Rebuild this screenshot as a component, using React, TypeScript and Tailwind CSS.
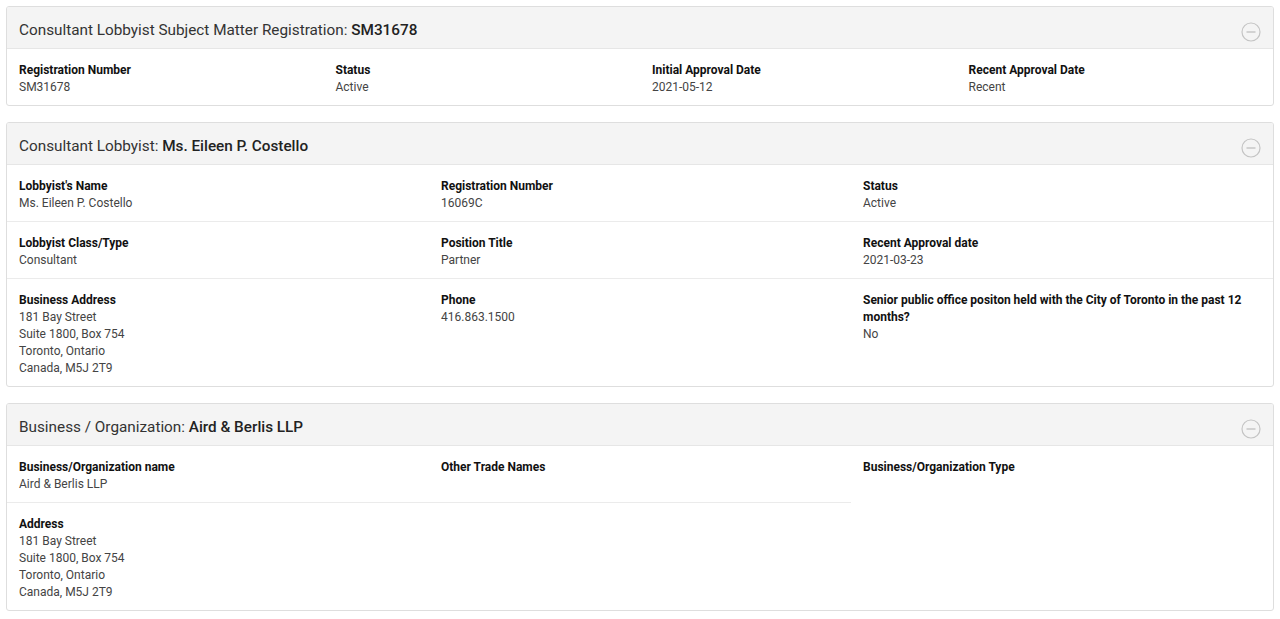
import React from 'react'

const font = { fontFamily: 'Roboto, "Noto Sans", sans-serif' }

const MinusCircle = () => (
  <svg width="20" height="20" viewBox="0 0 20 20" fill="none" className="shrink-0">
    <circle cx="10" cy="10" r="9" stroke="#c4c4c4" strokeWidth="1.2" />
    <line x1="5.5" y1="10" x2="14.5" y2="10" stroke="#b0b0b0" strokeWidth="1.2" />
  </svg>
)

interface PanelProps {
  label: string
  value: string
  children: React.ReactNode
}

const Panel = ({ label, value, children }: PanelProps) => (
  <section className="border border-[#dedede] rounded-[3px] bg-white overflow-hidden">
    <div className="h-[42px] bg-[#f4f4f4] border-b border-[#e6e6e6] flex items-center justify-between pl-3 pr-3">
      <h2 className="text-[15.3px] text-[#333] leading-none pt-[6px]">
        {label}: <span className="font-medium text-[#222]">{value}</span>
      </h2>
      <div className="pt-[8px]">
        <MinusCircle />
      </div>
    </div>
    {children}
  </section>
)

const Field = ({ label, lines, className = '' }: { label: string; lines?: string[]; className?: string }) => (
  <div className={`pl-3 pr-3 pt-[13px] pb-[9px] text-[12px] leading-[17px] ${className}`}>
    <div className="font-bold text-[#111]">{label}</div>
    {lines?.map((l) => (
      <div key={l} className="text-[#444]">{l}</div>
    ))}
  </div>
)

const address = ['181 Bay Street', 'Suite 1800, Box 754', 'Toronto, Ontario', 'Canada, M5J 2T9']

export default function App() {
  return (
    <div className="bg-white min-h-screen px-[6px] pt-[6px] flex flex-col gap-4" style={font}>
      <Panel label="Consultant Lobbyist Subject Matter Registration" value="SM31678">
        <div className="grid grid-cols-4">
          <Field label="Registration Number" lines={['SM31678']} />
          <Field label="Status" lines={['Active']} />
          <Field label="Initial Approval Date" lines={['2021-05-12']} />
          <Field label="Recent Approval Date" lines={['Recent']} />
        </div>
      </Panel>

      <Panel label="Consultant Lobbyist" value="Ms. Eileen P. Costello">
        <div className="grid grid-cols-3">
          <Field className="border-b border-[#ebebeb]" label="Lobbyist's Name" lines={['Ms. Eileen P. Costello']} />
          <Field className="border-b border-[#ebebeb]" label="Registration Number" lines={['16069C']} />
          <Field className="border-b border-[#ebebeb]" label="Status" lines={['Active']} />
          <Field className="border-b border-[#ebebeb]" label="Lobbyist Class/Type" lines={['Consultant']} />
          <Field className="border-b border-[#ebebeb]" label="Position Title" lines={['Partner']} />
          <Field className="border-b border-[#ebebeb]" label="Recent Approval date" lines={['2021-03-23']} />
          <Field label="Business Address" lines={address} />
          <Field label="Phone" lines={['416.863.1500']} />
          <Field label="Senior public office positon held with the City of Toronto in the past 12 months?" lines={['No']} />
        </div>
      </Panel>

      <Panel label="Business / Organization" value="Aird & Berlis LLP">
        <div className="grid grid-cols-3">
          <Field className="border-b border-[#ebebeb]" label="Business/Organization name" lines={['Aird & Berlis LLP']} />
          <Field className="border-b border-[#ebebeb]" label="Other Trade Names" />
          <Field className="row-span-2" label="Business/Organization Type" />
          <Field label="Address" lines={address} />
        </div>
      </Panel>
    </div>
  )
}
